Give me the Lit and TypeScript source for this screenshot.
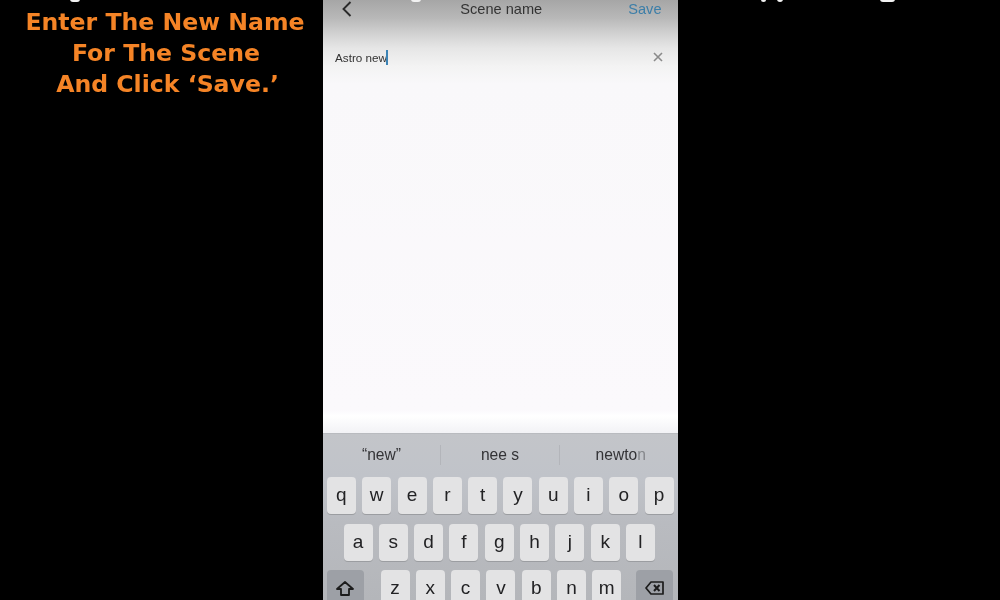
import { LitElement, html, css, svg } from "lit";
import { customElement } from "lit/decorators.js";

const ROWS = ["qwertyuiop", "asdfghjkl", "zxcvbnm"];
const CLIPPED = [
  { x: 70, w: 10 },
  { x: 411, w: 10 },
  { x: 761, w: 5 },
  { x: 777, w: 6 },
  { x: 880, w: 15 },
];

@customElement("app-root")
export class AppRoot extends LitElement {
  static styles = css`
    :host {
      display: block;
      width: 1000px;
      height: 600px;
      background: #000;
      position: relative;
      overflow: hidden;
      font-family: "Liberation Sans", Arial, sans-serif;
    }
    .page { display: flex; width: 1000px; height: 600px; }
    .caption {
      width: 323px;
      flex: none;
      box-sizing: border-box;
      padding: 6.5px 0 0 7px;
      font-family: "DejaVu Sans", Verdana, sans-serif;
      font-weight: 700;
      font-size: 23.6px;
      line-height: 31px;
      color: #f58426;
      text-align: center;
      filter: blur(0.4px);
    }
    .caption div:nth-child(2) { padding-left: 2px; }
    .caption div:last-child { padding-left: 5px; }
    .phone {
      width: 354.5px;
      flex: none;
      height: 600px;
      display: flex;
      flex-direction: column;
      overflow: hidden;
      background: linear-gradient(#a6a6a6 0, #b8b8b8 18px, #d2d2d2 34px, #e6e6e6 48px, #f3f3f3 66px, #f9f8fa 84px, #fbf9fc 410px, #ffffff 416px, #f3f3f6 432px);
    }
    .spacer { flex: 1; }
    .nav {
      height: 18px;
      display: grid;
      grid-template-columns: 1fr auto 1fr;
      align-items: center;
      padding: 0 16px 0 18px;
      font-size: 14.6px;
      color: #333;
      filter: blur(0.4px);
    }
    .nav svg { display: block; }
    .save { justify-self: end; color: #3c7ea8; font-size: 14.6px; }
    .field {
      margin-top: 30px;
      height: 18px;
      display: flex;
      align-items: center;
      padding: 0 15px 0 12px;
      font-size: 11.7px;
      color: #333;
      filter: blur(0.35px);
    }
    .caret { width: 1.5px; height: 15px; background: #3b83b5; margin-left: -0.5px; }
    .field svg { margin-left: auto; display: block; }
    .kb {
      height: 167px;
      flex: none;
      overflow: hidden;
      background: linear-gradient(#c3c5c9 0, #c0c3c9 44px, #b9bbc0 90px, #b4b6ba 167px);
      box-shadow: inset 0 1px 0 #b9bbbf;
    }
    .sugg { height: 44px; display: flex; align-items: center; font-size: 15.6px; color: #333336; filter: blur(0.35px); }
    .sugg span { text-align: center; }
    .s1 { width: 117px; }
    .s2 { width: 118px; border-left: 1px solid #b3b5ba; border-right: 1px solid #b3b5ba; line-height: 20px; }
    .s3 { flex: 1; padding-left: 4px; }
    .s3 i { font-style: normal; color: #85878b; }
    .row { display: flex; justify-content: center; gap: 6.3px; height: 37px; margin-bottom: 9.5px; }
    .row.home { padding-right: 2px; }
    .row.last { justify-content: flex-start; padding: 0 0 0 4px; height: 60px; gap: 0; }
    .letters { display: flex; gap: 6.3px; margin: 0 15px 0 17px; }
    .key {
      width: 29px;
      height: 37px;
      flex: none;
      border-radius: 4px;
      background: #e3e3e4;
      box-shadow: 0 1px 0 #9b9da1;
      display: flex;
      align-items: center;
      justify-content: center;
      font-size: 19px;
      color: #222224;
      padding-bottom: 1px;
      box-sizing: border-box;
      filter: blur(0.35px);
    }
    .letters .key { height: 60px; align-items: flex-start; padding-top: 7px; }
    .fn {
      width: 36.5px;
      height: 60px;
      flex: none;
      border-radius: 4px;
      background: #9da0a6;
      display: flex;
      justify-content: center;
      align-items: flex-start;
      padding-top: 11px;
      box-sizing: border-box;
    }
    .shift { padding-right: 1px; }
    .tip { position: absolute; top: -1px; height: 3px; background: #f2f2f2; border-radius: 0 0 6px 6px; filter: blur(0.5px); }
  `;

  render() {
    return html`
      <div class="page">
        <div class="caption">
          <div>Enter The New Name</div>
          <div>For The Scene</div>
          <div>And Click ‘Save.’</div>
        </div>
        <div class="phone">
          <div class="nav">
            <svg width="11" height="18" viewBox="0 0 11 18">
              <path d="M9.5 2 L2.5 9 L9.5 16" fill="none" stroke="#2a2a2a" stroke-width="1.9" />
            </svg>
            <span>Scene name</span>
            <span class="save">Save</span>
          </div>
          <div class="field">
            <span>Astro new</span><span class="caret"></span>
            <svg width="10" height="10" viewBox="0 0 10 10">
              <path d="M1 1 L9 9 M9 1 L1 9" stroke="#8a8a8a" stroke-width="1.6" />
            </svg>
          </div>
          <div class="spacer"></div>
          <div class="kb">
            <div class="sugg">
              <span class="s1">“new”</span>
              <span class="s2">nee s</span>
              <span class="s3">newto<i>n</i></span>
            </div>
            <div class="row">${[...ROWS[0]].map((k) => html`<div class="key">${k}</div>`)}</div>
            <div class="row home">${[...ROWS[1]].map((k) => html`<div class="key">${k}</div>`)}</div>
            <div class="row last">
              <div class="fn shift">
                <svg width="18" height="15" viewBox="0 0 18 15">
                  ${svg`<path d="M9 1 L17 8 H13 V14 H5 V8 H1 Z" fill="none" stroke="#1c1c1c" stroke-width="1.8" stroke-linejoin="round" />`}
                </svg>
              </div>
              <div class="letters">${[...ROWS[2]].map((k) => html`<div class="key">${k}</div>`)}</div>
              <div class="fn">
                <svg width="19" height="14" viewBox="0 0 19 14">
                  ${svg`<path d="M6 1 H18 V13 H6 L1 7 Z" fill="none" stroke="#1c1c1c" stroke-width="1.7" stroke-linejoin="round" />
                  <path d="M9 4 L14.5 10 M14.5 4 L9 10" stroke="#1c1c1c" stroke-width="2" />`}
                </svg>
              </div>
            </div>
          </div>
        </div>
      </div>
      ${CLIPPED.map((c) => html`<div class="tip" style="left:${c.x}px;width:${c.w}px"></div>`)}
    `;
  }
}
